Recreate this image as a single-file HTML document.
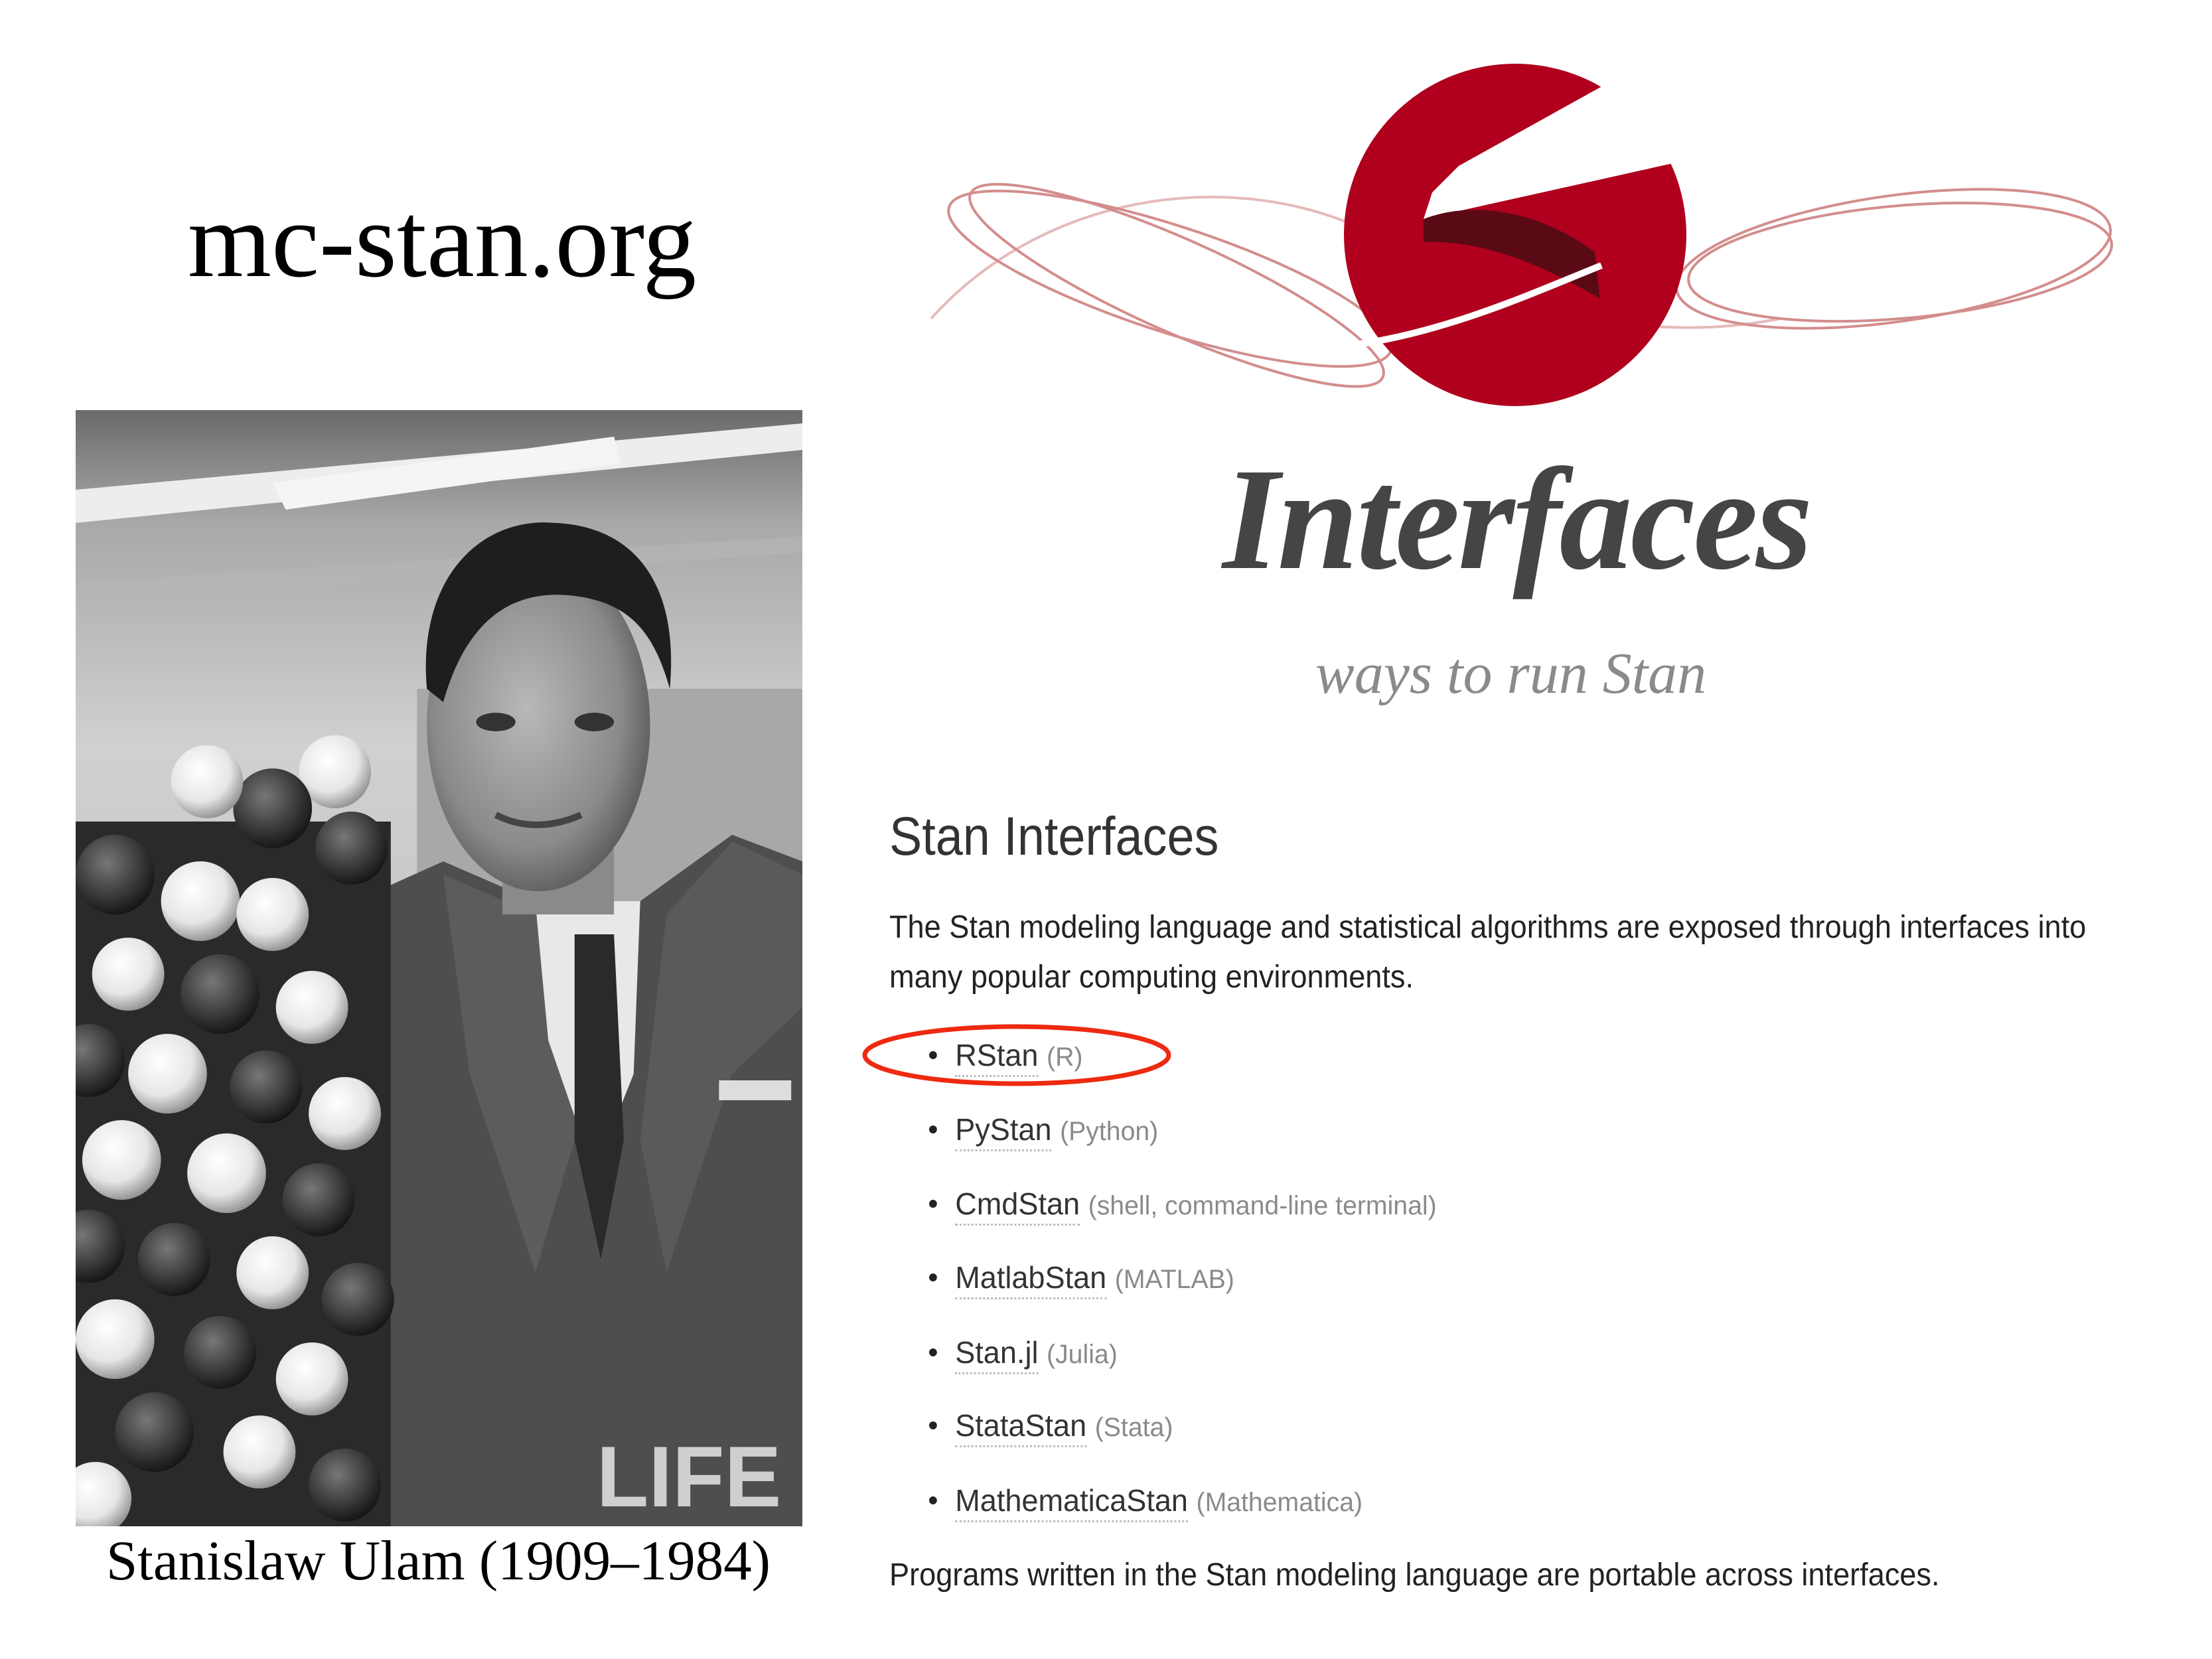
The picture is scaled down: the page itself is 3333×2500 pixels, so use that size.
<!DOCTYPE html>
<html><head><meta charset="utf-8">
<style>
html,body{margin:0;padding:0;background:#fff;}
body{width:3333px;height:2500px;position:relative;overflow:hidden;}
.t{position:absolute;white-space:nowrap;line-height:1;}
.serif{font-family:"Liberation Serif",serif;}
.sans{font-family:"Liberation Sans",sans-serif;}
.sc{transform:scaleX(0.94);transform-origin:left top;}
.li{position:absolute;left:1400px;font-family:"Liberation Sans",sans-serif;font-size:46px;line-height:1;white-space:nowrap;transform:scaleX(0.98);transform-origin:left top;}
.li .d{display:inline-block;width:12px;height:12px;border-radius:50%;background:#222;margin-right:28px;vertical-align:middle;position:relative;top:-4px}
.li .n{color:#333;border-bottom:3px dotted #bbb;padding-bottom:4px}
.li .p{color:#8a8a8a;font-size:40px}
</style></head><body>

<div class="t serif" style="left:283px;top:282px;font-size:162px;color:#000;">mc-stan.org</div>

<svg style="position:absolute;left:114px;top:618px" width="1095" height="1682" viewBox="0 0 1107 1682" preserveAspectRatio="none">
<defs>
<linearGradient id="ceil" x1="0" y1="0" x2="0" y2="1"><stop offset="0" stop-color="#6a6a6a"/><stop offset="0.1" stop-color="#a8a8a8"/><stop offset="0.3" stop-color="#d0d0d0"/><stop offset="0.55" stop-color="#c4c4c4"/><stop offset="1" stop-color="#9a9a9a"/></linearGradient>
<radialGradient id="face" cx="0.45" cy="0.45" r="0.6"><stop offset="0" stop-color="#b8b8b8"/><stop offset="0.7" stop-color="#8a8a8a"/><stop offset="1" stop-color="#555"/></radialGradient>
<radialGradient id="wb" cx="0.4" cy="0.35" r="0.7"><stop offset="0" stop-color="#fff"/><stop offset="0.6" stop-color="#e6e6e6"/><stop offset="1" stop-color="#888"/></radialGradient>
<radialGradient id="db" cx="0.4" cy="0.35" r="0.7"><stop offset="0" stop-color="#777"/><stop offset="0.6" stop-color="#3a3a3a"/><stop offset="1" stop-color="#111"/></radialGradient>
</defs>
<rect width="1107" height="1682" fill="url(#ceil)"/>
<polygon points="0,120 1107,20 1107,60 0,170" fill="#ededed"/>
<polygon points="300,110 820,40 830,80 320,150" fill="#f5f5f5"/>
<polygon points="0,260 1107,190 1107,215 0,290" fill="#b5b5b5" opacity="0.6"/>
<rect x="520" y="420" width="587" height="450" fill="#a8a8a8"/>
<polygon points="380,760 560,680 700,740 860,740 1000,640 1107,680 1107,1682 360,1682" fill="#4e4e4e"/>
<polygon points="560,700 700,760 790,1000 700,1300 600,1000" fill="#5c5c5c"/>
<polygon points="1000,650 900,760 860,1100 900,1300 1000,1000 1107,900 1107,700" fill="#5a5a5a"/>
<polygon points="700,740 860,740 850,1000 790,1150 720,950" fill="#e8e8e8"/>
<polygon points="760,790 820,790 835,1100 800,1280 760,1100" fill="#2a2a2a"/>
<rect x="980" y="1010" width="110" height="30" fill="#ddd"/>
<rect x="650" y="600" width="170" height="160" fill="#8a8a8a"/>
<ellipse cx="705" cy="475" rx="170" ry="250" fill="url(#face)"/>
<path d="M535,420 C520,250 620,160 730,170 C850,175 920,260 905,420 C880,330 840,290 760,280 C680,270 600,300 560,440 Z" fill="#1e1e1e"/>
<ellipse cx="640" cy="470" rx="30" ry="14" fill="#333"/>
<ellipse cx="790" cy="470" rx="30" ry="14" fill="#333"/>
<path d="M640,610 Q700,640 770,610" stroke="#444" stroke-width="10" fill="none"/>
<g>
<rect x="0" y="620" width="480" height="1062" fill="#2a2a2a"/>
<circle cx="395" cy="545" r="55" fill="url(#wb)"/>
<circle cx="300" cy="600" r="60" fill="url(#db)"/>
<circle cx="200" cy="560" r="55" fill="url(#wb)"/>
<circle cx="60" cy="700" r="60" fill="url(#db)"/>
<circle cx="190" cy="740" r="60" fill="url(#wb)"/>
<circle cx="300" cy="760" r="55" fill="url(#wb)"/>
<circle cx="420" cy="660" r="55" fill="url(#db)"/>
<circle cx="80" cy="850" r="55" fill="url(#wb)"/>
<circle cx="220" cy="880" r="60" fill="url(#db)"/>
<circle cx="360" cy="900" r="55" fill="url(#wb)"/>
<circle cx="20" cy="980" r="55" fill="url(#db)"/>
<circle cx="140" cy="1000" r="60" fill="url(#wb)"/>
<circle cx="290" cy="1020" r="55" fill="url(#db)"/>
<circle cx="410" cy="1060" r="55" fill="url(#wb)"/>
<circle cx="70" cy="1130" r="60" fill="url(#wb)"/>
<circle cx="230" cy="1150" r="60" fill="url(#wb)"/>
<circle cx="370" cy="1190" r="55" fill="url(#db)"/>
<circle cx="20" cy="1260" r="55" fill="url(#db)"/>
<circle cx="150" cy="1280" r="55" fill="url(#db)"/>
<circle cx="300" cy="1300" r="55" fill="url(#wb)"/>
<circle cx="430" cy="1340" r="55" fill="url(#db)"/>
<circle cx="60" cy="1400" r="60" fill="url(#wb)"/>
<circle cx="220" cy="1420" r="55" fill="url(#db)"/>
<circle cx="360" cy="1460" r="55" fill="url(#wb)"/>
<circle cx="120" cy="1540" r="60" fill="url(#db)"/>
<circle cx="280" cy="1570" r="55" fill="url(#wb)"/>
<circle cx="30" cy="1640" r="55" fill="url(#wb)"/>
<circle cx="410" cy="1620" r="55" fill="url(#db)"/>
</g>
<text x="1075" y="1652" text-anchor="end" font-family="Liberation Sans,sans-serif" font-weight="bold" font-size="130" fill="#cfcfcf">LIFE</text>
</svg>

<div class="t serif" style="left:160px;top:2310px;font-size:85px;color:#000;">Stanislaw Ulam (1909–1984)</div>

<svg style="position:absolute;left:1363px;top:60px" width="1950" height="600" viewBox="1380 60 1950 600">
<g fill="none" stroke="#b03030" stroke-width="4" opacity="0.55">
<ellipse cx="1780" cy="420" rx="350" ry="80" transform="rotate(18 1780 420)"/>
<ellipse cx="1790" cy="430" rx="340" ry="70" transform="rotate(24 1790 430)"/>
<ellipse cx="2870" cy="390" rx="330" ry="95" transform="rotate(-8 2870 390)"/>
<ellipse cx="2880" cy="395" rx="320" ry="85" transform="rotate(-5 2880 395)"/>
<path d="M1420,480 C1600,280 1900,250 2100,360 C2300,470 2500,520 2700,480" opacity="0.6"/>
</g>
<circle cx="2300" cy="354" r="258" fill="#b0001e"/>
<polygon points="2440,125 2560,210 2565,240 2215,318 2162,330 2175,290 2215,250" fill="#fff"/>
<path d="M2162,330 C2240,300 2340,320 2420,380 L2428,450 C2360,410 2260,360 2162,365 Z" fill="#5a0a14"/>
<path d="M2055,520 C2200,500 2330,440 2430,400" stroke="#fff" stroke-width="10" fill="none"/>
</svg>

<div class="t serif" style="left:1842px;top:672px;font-size:220px;font-weight:bold;font-style:italic;color:#454545;letter-spacing:-3px;">Interfaces</div>
<div class="t serif" style="left:1982px;top:972px;font-size:88px;font-style:italic;color:#8a8a8a;">ways to run Stan</div>

<div class="t sans" style="left:1340px;top:1220px;font-size:82px;color:#333;transform:scaleX(0.9);transform-origin:left top;">Stan Interfaces</div>
<div class="t sans sc" style="left:1340px;top:1374px;font-size:48px;color:#222;">The Stan modeling language and statistical algorithms are exposed through interfaces into</div>
<div class="t sans sc" style="left:1340px;top:1449px;font-size:48px;color:#222;">many popular computing environments.</div>

<div class="li" style="top:1567px"><span class="d"></span><span class="n">RStan</span> <span class="p">(R)</span></div>
<div class="li" style="top:1679px"><span class="d"></span><span class="n">PyStan</span> <span class="p">(Python)</span></div>
<div class="li" style="top:1791px"><span class="d"></span><span class="n">CmdStan</span> <span class="p">(shell, command-line terminal)</span></div>
<div class="li" style="top:1902px"><span class="d"></span><span class="n">MatlabStan</span> <span class="p">(MATLAB)</span></div>
<div class="li" style="top:2015px"><span class="d"></span><span class="n">Stan.jl</span> <span class="p">(Julia)</span></div>
<div class="li" style="top:2125px"><span class="d"></span><span class="n">StataStan</span> <span class="p">(Stata)</span></div>
<div class="li" style="top:2238px"><span class="d"></span><span class="n">MathematicaStan</span> <span class="p">(Mathematica)</span></div>

<svg style="position:absolute;left:1287px;top:1533px" width="500" height="120">
<ellipse cx="245" cy="57" rx="229" ry="43" fill="none" stroke="#ee2a10" stroke-width="7"/>
</svg>

<div class="t sans sc" style="left:1340px;top:2350px;font-size:48px;color:#222;">Programs written in the Stan modeling language are portable across interfaces.</div>

</body></html>
